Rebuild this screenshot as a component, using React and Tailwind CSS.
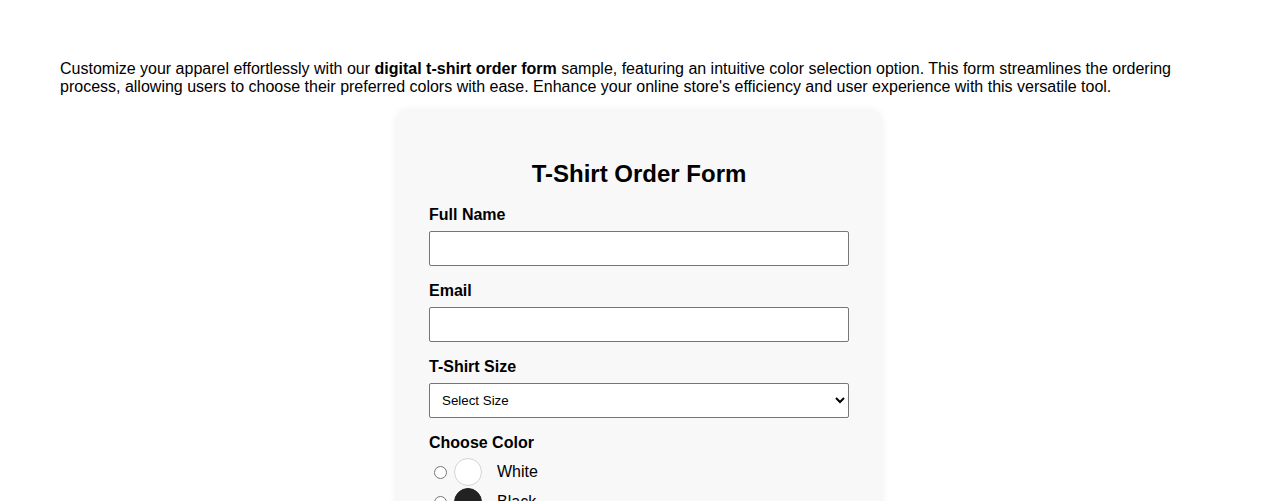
import { useState } from "react";

const colors = [
  { value: "white", label: "White", swatch: "bg-white border border-[#d4d4d4]" },
  { value: "black", label: "Black", swatch: "bg-[#222222] border border-[#222222]" },
];

export default function App() {
  const [color, setColor] = useState("");

  return (
    <div className="min-h-screen bg-white px-[60px] pt-[60px] font-['Liberation_Sans',Arial,sans-serif] text-black">
      {/* Intro */}
      <p className="text-[16px] leading-[18px]">
        Customize your apparel effortlessly with our <strong className="font-bold">digital t-shirt order form</strong> sample,
        featuring an intuitive color selection option. This form streamlines the ordering process, allowing users to
        choose their preferred colors with ease. Enhance your online store's efficiency and user experience with this
        versatile tool.
      </p>

      {/* Card */}
      <div className="mx-auto mt-[15px] w-[484px] rounded-[10px] bg-[#f8f8f8] px-8 pt-[49px] pb-8 shadow-[0_0_10px_rgba(0,0,0,0.08)]">
        <h2 className="text-center text-[24px] font-bold leading-[28px]">T-Shirt Order Form</h2>

        <form className="mt-[18px]" onSubmit={(e) => e.preventDefault()}>
          <label className="block text-[16px] font-bold leading-[18px]">Full Name</label>
          <input
            type="text"
            className="mt-[7px] block h-[35px] w-full rounded-[2px] border border-[#767676] bg-white px-2 text-[13.33px] outline-none"
          />

          <label className="mt-[16px] block text-[16px] font-bold leading-[18px]">Email</label>
          <input
            type="email"
            className="mt-[7px] block h-[35px] w-full rounded-[2px] border border-[#767676] bg-white px-2 text-[13.33px] outline-none"
          />

          <label className="mt-[16px] block text-[16px] font-bold leading-[18px]">T-Shirt Size</label>
          <select
            defaultValue=""
            className="mt-[7px] block h-[35px] w-full rounded-[2px] border border-[#767676] bg-white px-2 text-[13.33px] text-black outline-none"
          >
            <option value="">Select Size</option>
            <option value="s">Small</option>
            <option value="m">Medium</option>
            <option value="l">Large</option>
            <option value="xl">X-Large</option>
          </select>

          <label className="mt-[16px] block text-[16px] font-bold leading-[18px]">Choose Color</label>
          <div className="mt-[6px] flex flex-col gap-[2px]">
            {colors.map((c) => (
              <label key={c.value} className="flex h-[28px] items-center text-[16px]">
                <input
                  type="radio"
                  name="color"
                  value={c.value}
                  checked={color === c.value}
                  onChange={() => setColor(c.value)}
                  className="ml-[5px] h-[13px] w-[13px]"
                />
                <span className={`ml-[7px] h-[28px] w-[28px] rounded-full ${c.swatch}`}></span>
                <span className="ml-[15px]">{c.label}</span>
              </label>
            ))}
          </div>
        </form>
      </div>
    </div>
  );
}
